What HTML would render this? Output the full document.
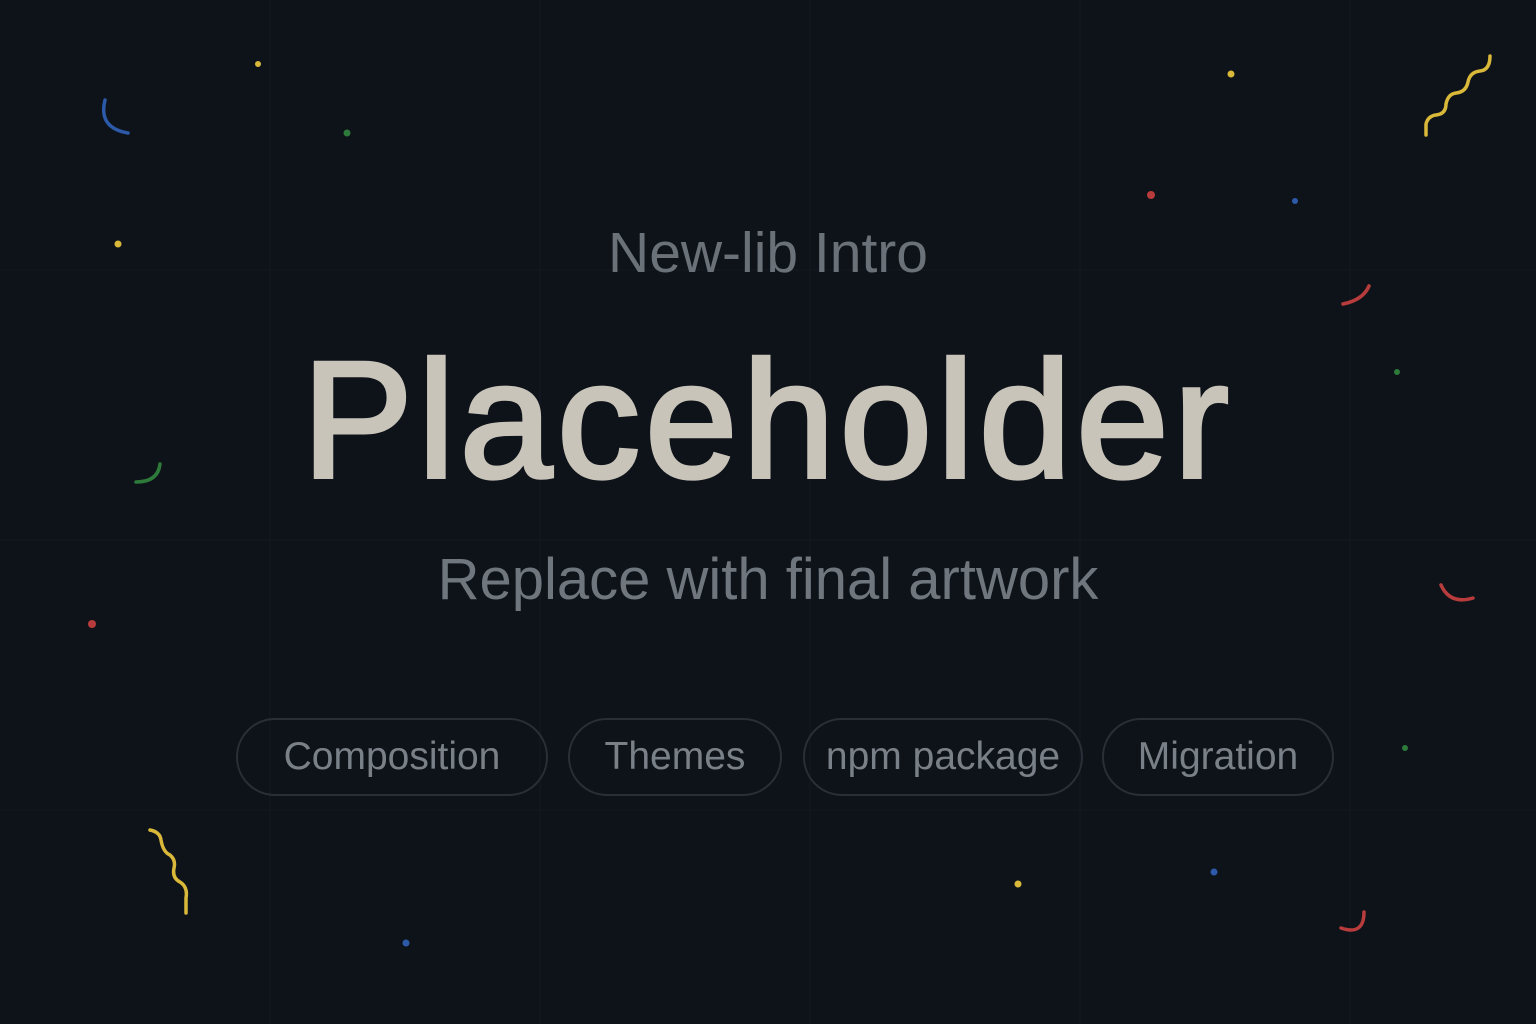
<!DOCTYPE html>
<html><head><style>
html,body{margin:0;padding:0}
body{width:1536px;height:1024px;background:#0e131a;position:relative;overflow:hidden;font-family:"Liberation Sans",sans-serif}
.t{position:absolute;left:0;width:1536px;text-align:center;white-space:nowrap}
.pill{position:absolute;top:718px;height:74px;border:2px solid #2a2f37;border-radius:40px;color:#7a8088;font-size:39px;line-height:74px;text-align:center;box-sizing:content-box}
</style></head><body>
<svg width="1536" height="1024" style="position:absolute;left:0;top:0">
<g stroke="#141a21" stroke-width="1">
<line x1="0" y1="270" x2="1536" y2="270"/><line x1="0" y1="540" x2="1536" y2="540"/><line x1="0" y1="810" x2="1536" y2="810"/>
<line x1="270" y1="0" x2="270" y2="1024"/><line x1="540" y1="0" x2="540" y2="1024"/><line x1="810" y1="0" x2="810" y2="1024"/><line x1="1080" y1="0" x2="1080" y2="1024"/><line x1="1350" y1="0" x2="1350" y2="1024"/>
</g>
<g fill="none" stroke-width="3.5" stroke-linecap="round">
<path d="M105 100 Q98 128 128 133" stroke="#2c5aa8"/>
<path d="M136 482 Q158 482 160 464" stroke="#2e7a3a"/>
<path d="M1343 304 Q1363 300 1369 286" stroke="#b83c3c"/>
<path d="M1441 585 Q1450 605 1473 598" stroke="#b83c3c"/>
<path d="M1341 928 Q1364 936 1364 912" stroke="#b83c3c"/>
<path d="M1426 135 L1426 124 Q1428 116 1436 115 Q1446 114 1446 104 Q1448 94 1456 93 Q1466 92 1468 82 Q1470 72 1480 71 Q1490 70 1490 56" stroke="#d9b83a"/>
<path d="M150 830 Q160 832 161 840 Q163 852 170 855 Q176 860 174 868 Q172 878 180 882 Q188 887 186 898 L186 913" stroke="#d9b83a"/>
</g>
<g>
<circle cx="258" cy="64" r="3" fill="#d9b83a"/><circle cx="347" cy="133" r="3.5" fill="#2e7a3a"/>
<circle cx="118" cy="244" r="3.5" fill="#d9b83a"/><circle cx="92" cy="624" r="4" fill="#b83c3c"/>
<circle cx="1231" cy="74" r="3.5" fill="#d9b83a"/><circle cx="1151" cy="195" r="4" fill="#b83c3c"/>
<circle cx="1295" cy="201" r="3" fill="#2c5aa8"/><circle cx="1397" cy="372" r="3" fill="#2e7a3a"/>
<circle cx="1405" cy="748" r="3" fill="#2e7a3a"/><circle cx="1214" cy="872" r="3.5" fill="#2c5aa8"/>
<circle cx="1018" cy="884" r="3.5" fill="#d9b83a"/><circle cx="406" cy="943" r="3.5" fill="#2c5aa8"/>
</g>
</svg>
<div class="t" style="top:220px;font-size:57px;color:#6b7178">New-lib Intro</div>
<div class="t" style="top:326px;font-size:166px;color:#c9c4b9;letter-spacing:5px;-webkit-text-stroke:4px #c9c4b9">Placeholder</div>
<div class="t" style="top:546px;font-size:58px;color:#70767e">Replace with final artwork</div>
<div class="pill" style="left:236px;width:308px">Composition</div>
<div class="pill" style="left:568px;width:210px">Themes</div>
<div class="pill" style="left:803px;width:276px">npm package</div>
<div class="pill" style="left:1102px;width:228px">Migration</div>
</body></html>
